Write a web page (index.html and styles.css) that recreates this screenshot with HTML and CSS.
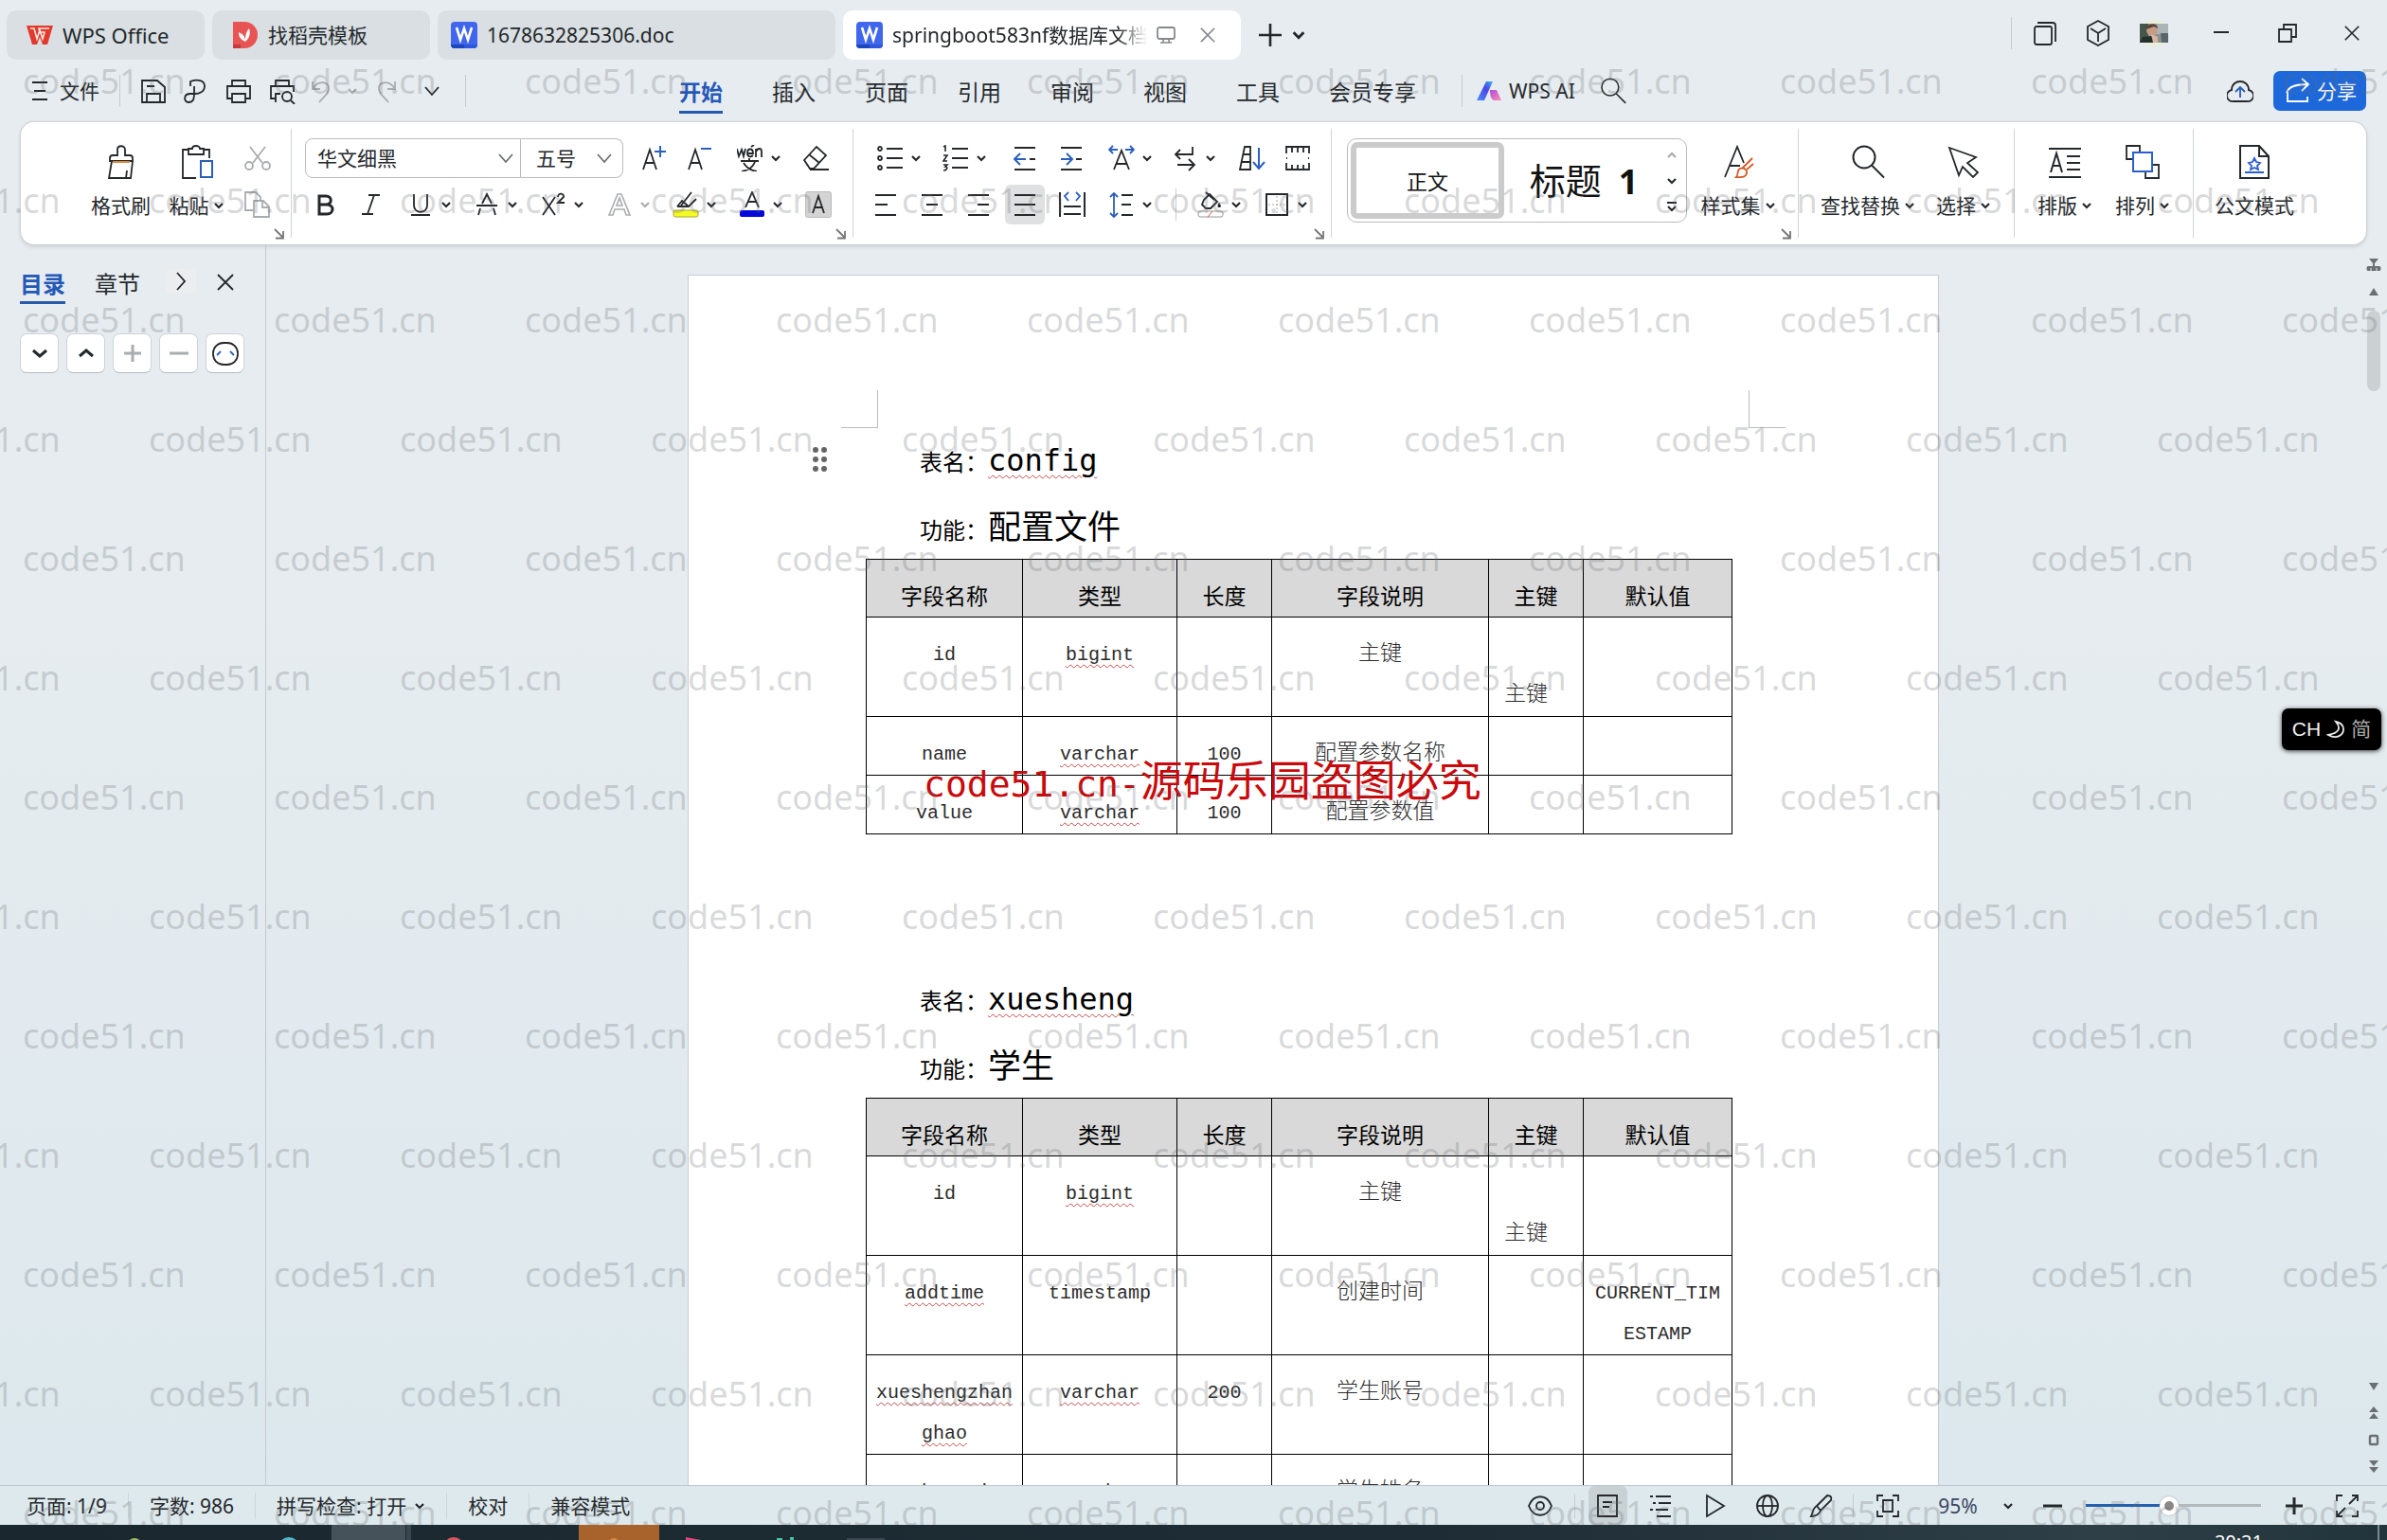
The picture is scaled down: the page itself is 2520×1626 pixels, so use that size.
FILE: index.html
```html
<!DOCTYPE html>
<html lang="zh-CN">
<head>
<meta charset="utf-8">
<title>springboot583nf数据库文档 - WPS Office</title>
<link rel="stylesheet" href="styles.css">
</head>
<body>
<svg class="sprite" aria-hidden="true">
  <symbol id="chev" viewBox="0 0 12 12"><path d="M2 4l4 4 4-4" fill="none" stroke="currentColor" stroke-width="2.2"/></symbol>
  <symbol id="chev-thin" viewBox="0 0 18 18"><path d="M2 5l7 8 7-8" fill="none" stroke="currentColor" stroke-width="1.8"/></symbol>
  <symbol id="launch" viewBox="0 0 12 12"><path d="M1 1l9 9M10 3v7.500H2" fill="none" stroke="currentColor" stroke-width="1.800"/></symbol>
  <symbol id="cross" viewBox="0 0 20 20"><path d="M2 2l16 16M18 2L2 18" fill="none" stroke="currentColor" stroke-width="1.8"/></symbol>
  <symbol id="word" viewBox="0 0 28 28"><rect width="28" height="28" rx="4" fill="#3f66ec"/><path d="M0 24h14v4H4a4 4 0 0 1-4-4z" fill="#1c46bd"/><path d="M14 24h14a4 4 0 0 1-4 4H14z" fill="#2f57dc"/><path d="M6 6l4 13 4-12 4 12 4-13" fill="none" stroke="#fff" stroke-width="2.600"/></symbol>
  <symbol id="search" viewBox="0 0 36 36"><circle cx="14" cy="13" r="11.500" fill="none" stroke="currentColor" stroke-width="2"/><path d="M22 21.500l13 13" stroke="currentColor" stroke-width="2"/></symbol>
</svg>

<header class="titlebar">
  <button class="tab tab-home"><svg class="i28" viewBox="0 0 28 28"><path d="M0 4h28l-6 20h-5l-3-8-3 8H6z" fill="#e3392b"/><path d="M4 7h4l3 11 3-9 3 9 2-7h-5l-1-4h11" fill="none" stroke="#fbe9e6" stroke-width="1.600"/></svg>WPS Office</button>
  <button class="tab tab-tpl"><svg class="i28" viewBox="0 0 28 28"><path d="M1 0h12a14 14 0 0 1 0 28H1z" fill="#e85454"/><path d="M1 24h8v4H1z" fill="#c73a3a"/><path d="M14 21c-5-2-7-5-7-10 4 2 6 4 7 8 0-5 1-9 4-12 2 6 0 11-4 14z" fill="#fff"/></svg>找稻壳模板</button>
  <button class="tab tab-doc"><svg class="i28"><use href="#word"/></svg>1678632825306.doc</button>
  <div class="tab tab-doc tab-active"><svg class="i28"><use href="#word"/></svg><span class="tab-name">springboot583nf数据库文档</span>
    <svg class="i20 muted" viewBox="0 0 20 20"><rect x="1" y="2" width="18" height="12" rx="2" fill="none" stroke="currentColor" stroke-width="1.800"/><path d="M7 14v4M13 14v4M4 18h12" stroke="currentColor" stroke-width="1.600"/></svg>
    <button class="icon-btn muted" aria-label="关闭标签"><svg class="i18"><use href="#cross"/></svg></button></div>
  <button class="icon-btn new-tab" aria-label="新建"><svg class="i28" viewBox="0 0 28 28"><path d="M14 2v24M2 14h24" stroke="currentColor" stroke-width="2.600"/></svg></button>
  <button class="icon-btn" aria-label="标签列表"><svg class="i16"><use href="#chev"/></svg></button>
  <div class="window-tools">
    <span class="vline"></span>
    <button class="icon-btn" aria-label="窗口"><svg class="i28" viewBox="0 0 28 28"><g fill="none" stroke="currentColor" stroke-width="1.800"><rect x="3" y="7" width="18" height="19" rx="2"/><path d="M6 3h16a3 3 0 0 1 3 3v17"/></g></svg></button>
    <button class="icon-btn" aria-label="应用"><svg class="i28" viewBox="0 0 28 28"><g fill="none" stroke="currentColor" stroke-width="1.800"><path d="M14 1l11 6v14l-11 6-11-6V7zM6 9l8 5 8-5M14 14v9"/></g></svg></button>
    <button class="icon-btn" aria-label="账户"><svg class="avatar" viewBox="0 0 30 32"><circle cx="15" cy="16" r="15" fill="#e8eddd"/><rect y="6" width="30" height="20" fill="#8b9490"/><path d="M0 6h9v20H0z" fill="#45564b"/><path d="M18 6h12v11H18z" fill="#aab5b8"/><ellipse cx="13" cy="13" rx="6" ry="6" fill="#c59d86"/><path d="M7 12c0-7 12-7 12-1l-4-2z" fill="#5d4135"/><path d="M0 26l3-6 9-1 5 7z" fill="#243029"/><path d="M12 17l7 3v6h-5z" fill="#d8b4a2"/><path d="M22 16h8v10h-7z" fill="#59666b"/></svg></button>
    <button class="icon-btn" aria-label="最小化"><svg class="i20" viewBox="0 0 20 20"><path d="M2 9h16" stroke="currentColor" stroke-width="2"/></svg></button>
    <button class="icon-btn" aria-label="还原"><svg class="i20" viewBox="0 0 20 20"><path d="M1 6h13v13H1zM6 6V1h13v13h-5" fill="none" stroke="currentColor" stroke-width="1.800"/></svg></button>
    <button class="icon-btn" aria-label="关闭"><svg class="i18"><use href="#cross"/></svg></button>
  </div>
</header>

<nav class="menubar">
  <button class="file-btn"><svg class="i28" viewBox="0 0 28 28"><path d="M6 5h16M8 14h12M6 23h16" stroke="currentColor" stroke-width="2"/></svg>文件</button>
  <div class="quick">
    <span class="vline"></span>
    <button class="icon-btn" aria-label="保存"><svg class="i28" viewBox="0 0 28 28"><g fill="none" stroke="currentColor" stroke-width="1.800"><path d="M2 3h16l8 7v16H2zM7 26v-9h14v9M7 9h8"/></g></svg></button>
    <button class="icon-btn" aria-label="输出为PDF"><svg class="i28" viewBox="0 0 28 28"><path d="M9 9V4c8-3 15-1 15 5s-6 8-10 8H9c-8 0-7 9-2 9 6 0 6-5 6-10V9" fill="none" stroke="currentColor" stroke-width="1.800"/></svg></button>
    <button class="icon-btn" aria-label="打印"><svg class="i28" viewBox="0 0 28 28"><g fill="none" stroke="currentColor" stroke-width="1.800"><path d="M7 9V3h14v6M7 22H2V9h24v13h-5M7 17h14v9H7z"/></g></svg></button>
    <button class="icon-btn" aria-label="打印预览"><svg class="i28" viewBox="0 0 28 28"><g fill="none" stroke="currentColor" stroke-width="1.800"><path d="M7 9V3h14v6M7 22H2V9h24v6M7 26v-9h5"/><circle cx="19" cy="20" r="5"/><path d="M23 24l4 4"/></g></svg></button>
    <button class="icon-btn faint" aria-label="撤销"><svg class="i28" viewBox="0 0 28 28"><path d="M4 4v8h8M4 12C10 2 22 4 21 12c0 5-6 9-10 14" fill="none" stroke="currentColor" stroke-width="1.800"/></svg></button>
    <button class="icon-btn faint" aria-label="撤销列表"><svg class="i12"><use href="#chev"/></svg></button>
    <button class="icon-btn faint" aria-label="恢复"><svg class="i28" viewBox="0 0 28 28"><path d="M24 4v8h-8M24 12C18 2 6 4 7 12c0 5 6 9 10 14" fill="none" stroke="currentColor" stroke-width="1.800"/></svg></button>
    <button class="icon-btn" aria-label="更多"><svg class="i18"><use href="#chev-thin"/></svg></button>
    <span class="vline"></span>
  </div>
  <div class="menus">
    <button class="menu menu-on">开始</button><button class="menu">插入</button><button class="menu">页面</button><button class="menu">引用</button><button class="menu">审阅</button><button class="menu">视图</button><button class="menu">工具</button><button class="menu">会员专享</button>
  </div>
  <span class="vline ai-line"></span>
  <button class="ai-btn"><svg class="i28" viewBox="0 0 28 28"><defs><linearGradient id="g1" x1="1" y1="0" x2="0" y2="1"><stop offset="0" stop-color="#39b8f5"/><stop offset=".4" stop-color="#4a45e6"/><stop offset="1" stop-color="#4f8cf7"/></linearGradient><linearGradient id="g2" x1="0" y1="0" x2="1" y2="1"><stop offset="0" stop-color="#b14be0"/><stop offset="1" stop-color="#ff8fae"/></linearGradient></defs><path d="M11 4h7l-9 20H1z" fill="url(#g1)"/><path d="M15 13h7l5 11h-7c-4 0-5-6-5-11z" fill="url(#g2)"/></svg>WPS AI</button>
  <button class="icon-btn search-btn" aria-label="搜索"><svg class="i28"><use href="#search"/></svg></button>
  <div class="menu-right">
    <button class="icon-btn" aria-label="云同步"><svg class="i28" viewBox="0 0 28 28"><path d="M7 25a6 6 0 0 1-2-12C5 1 23 1 23 13a6 6 0 0 1-2 12z" fill="none" stroke="currentColor" stroke-width="1.800"/><path d="M14 21V11M9 15l5-5 5 5" fill="none" stroke="#2b5bb5" stroke-width="1.800"/></svg></button>
    <button class="share"><svg class="i28" viewBox="0 0 28 28"><path d="M3 14v11h21v-5M2 16C4 9 12 7 25 7M18 1l7 6-7 7" fill="none" stroke="#fff" stroke-width="1.800"/></svg>分享</button>
  </div>
</nav>

<section class="ribbon">
  <div class="group g-clip">
    <button class="big w75"><svg class="i36" viewBox="0 0 36 36"><g fill="none" stroke="currentColor" stroke-width="1.800"><path d="M6 17h24v-3c0-2-1-3-3-3h-5V5c0-5-8-5-8 0v6H9c-2 0-3 1-3 3zM8 17L5 35h23l2-18M24 27l-1 8"/></g><path d="M9 18h18" stroke="#d48a3a" stroke-width="2"/></svg><span>格式刷</span></button>
    <button class="big w85"><svg class="i36" viewBox="0 0 36 36"><g fill="none" stroke="currentColor" stroke-width="1.800"><path d="M9 5H3v30h14M25 5h6v9M9 10h16V4h-4c0-4-8-4-8 0H9z"/></g><path d="M22 17h12v17H22z" fill="none" stroke="#2b5fb5" stroke-width="2"/></svg><span>粘贴<svg class="i12"><use href="#chev"/></svg></span></button>
    <div class="rows rows-clip">
      <button class="icon-btn faint" aria-label="剪切"><svg class="i28" viewBox="0 0 28 28"><g fill="none" stroke="currentColor" stroke-width="1.800"><path d="M6 2l13 17M22 2L9 19"/><circle cx="5" cy="22" r="4"/><circle cx="23" cy="22" r="4"/></g></svg></button>
      <button class="icon-btn faint" aria-label="复制"><svg class="i28" viewBox="0 0 28 28"><g fill="none" stroke="currentColor" stroke-width="1.800"><path d="M9 20H1V1h11l5 5v4M10 10h10l6 6v11H10zM19 10v7h7"/></g></svg></button>
    </div>
    <svg class="launch"><use href="#launch"/></svg>
  </div>

  <div class="group g-font">
    <div class="rows">
      <div class="row row-font1">
        <label class="combo combo-l"><select aria-label="字体"><option>华文细黑</option></select><svg class="i18"><use href="#chev-thin"/></svg></label>
        <label class="combo combo-r"><select aria-label="字号"><option>五号</option></select><svg class="i18"><use href="#chev-thin"/></svg></label>
        <button class="icon-btn" aria-label="增大字号"><svg class="i28" viewBox="0 0 28 28"><path d="M3 26L10 5l7 21M5 19h10" fill="none" stroke="currentColor" stroke-width="1.800"/><path d="M21 1v12M15 7h12" stroke="#2b5fc0" stroke-width="2"/></svg></button>
        <button class="icon-btn" aria-label="减小字号"><svg class="i28" viewBox="0 0 28 28"><path d="M3 26L10 5l7 21M5 19h10" fill="none" stroke="currentColor" stroke-width="1.800"/><path d="M16 4h11" stroke="#2b5fc0" stroke-width="2"/></svg></button>
        <button class="duo" aria-label="拼音指南"><svg class="i28" viewBox="0 0 28 28"><g fill="none" stroke="currentColor" stroke-width="1.800"><path d="M0 4l2 8 3-7 2 7 2-8M11 9h6c0-6-6-6-6 0 0 4 4 4 6 2M15 2l3-2M20 13V4M20 7c2-4 6-4 6 0v6M4 17h19M13 14v3M7 19c3 5 8 8 14 9M19 18c-2 5-7 9-14 10"/></g></svg><svg class="i12"><use href="#chev"/></svg></button>
        <button class="icon-btn" aria-label="清除格式"><svg class="i28" viewBox="0 0 28 28"><g fill="none" stroke="currentColor" stroke-width="1.800"><path d="M2 16L15 2l10 9-13 14H8zM7 10l11 9M8 26h20"/></g></svg></button>
      </div>
      <div class="row row-font2">
        <button class="icon-btn" aria-label="加粗"><svg class="i28" viewBox="0 0 28 28"><path d="M8 5h7c7 0 7 9 0 9H8zM8 14h8c8 0 8 10 0 10H8z" fill="none" stroke="currentColor" stroke-width="3"/></svg></button>
        <button class="icon-btn" aria-label="倾斜"><svg class="i28" viewBox="0 0 28 28"><path d="M12 4h12M5 24h12M18 4l-7 20" stroke="currentColor" stroke-width="1.800"/></svg></button>
        <button class="duo" aria-label="下划线"><svg class="i28" viewBox="0 0 28 28"><path d="M7 3v12c0 9 14 9 14 0V3M4 25h20" fill="none" stroke="currentColor" stroke-width="1.800"/></svg><svg class="i12"><use href="#chev"/></svg></button>
        <button class="duo" aria-label="删除线"><svg class="i28" viewBox="0 0 28 28"><path d="M9 13l5-10 5 10M3 15h22M7 18l-2 7M21 18l2 7" fill="none" stroke="currentColor" stroke-width="1.800"/></svg><svg class="i12"><use href="#chev"/></svg></button>
        <button class="duo" aria-label="上标"><svg class="i28" viewBox="0 0 28 28"><path d="M3 6l13 19M16 6L3 25" stroke="currentColor" stroke-width="1.800"/><path d="M19 6c0-5 7-4 6 0l-6 6h7" fill="none" stroke="currentColor" stroke-width="1.800"/></svg><svg class="i12"><use href="#chev"/></svg></button>
        <button class="duo faint" aria-label="文字效果"><svg class="i28" viewBox="0 0 28 28"><path d="M3 25L12 3h4l9 22h-4l-2-6H9l-2 6zM11 15h6l-3-8z" fill="none" stroke="currentColor" stroke-width="1.600"/></svg><svg class="i12"><use href="#chev"/></svg></button>
        <button class="duo" aria-label="突出显示"><svg class="i28" viewBox="0 0 28 28"><path d="M5 16h12l8-8M9 15L20 1M5 16l5-6 6 5" fill="none" stroke="currentColor" stroke-width="1.800"/><rect x="1" y="20" width="26" height="7" rx="2" fill="#f5fb22" stroke="#a6ab3a"/></svg><svg class="i12"><use href="#chev"/></svg></button>
        <button class="duo" aria-label="字体颜色"><svg class="i28" viewBox="0 0 28 28"><path d="M7 17l7-16 7 16M9 11h10" fill="none" stroke="currentColor" stroke-width="1.800"/><rect x="1" y="20" width="26" height="7" rx="2" fill="#0508d8"/></svg><svg class="i12"><use href="#chev"/></svg></button>
        <button class="icon-btn" aria-label="字符底纹"><svg class="i28" viewBox="0 0 28 28"><rect x=".5" y=".5" width="27" height="27" rx="2" fill="#d4d4d4" stroke="#bbb"/><path d="M8 23l6-18 6 18M10 17h8" fill="none" stroke="currentColor" stroke-width="1.800"/></svg></button>
      </div>
    </div>
    <svg class="launch"><use href="#launch"/></svg>
  </div>

  <div class="group g-para">
    <div class="rows">
      <div class="row row-para1">
        <button class="duo" aria-label="项目符号"><svg class="i28" viewBox="0 0 28 28"><path d="M10 4h17M10 14h17M10 24h17" stroke="currentColor" stroke-width="2"/><g fill="none" stroke="currentColor" stroke-width="1.800"><circle cx="3" cy="4" r="2"/><circle cx="3" cy="14" r="2"/><circle cx="3" cy="24" r="2"/></g></svg><svg class="i12"><use href="#chev"/></svg></button>
        <button class="duo" aria-label="编号"><svg class="i28" viewBox="0 0 28 28"><path d="M10 4h17M10 14h17M10 24h17" stroke="currentColor" stroke-width="2"/><path d="M1 2l2-1v6M1 11h4l-4 6h4M1 21h4l-2 2c3 0 2 4-2 4" fill="none" stroke="currentColor" stroke-width="1.600"/></svg><svg class="i12"><use href="#chev"/></svg></button>
        <button class="icon-btn" aria-label="减少缩进"><svg class="i28" viewBox="0 0 28 28"><path d="M3 3h22M3 26h22M19 15h6" stroke="currentColor" stroke-width="2"/><path d="M15 15H3M9 9l-6 6 6 6" fill="none" stroke="#2b5fc0" stroke-width="2"/></svg></button>
        <button class="icon-btn" aria-label="增加缩进"><svg class="i28" viewBox="0 0 28 28"><path d="M3 3h22M3 26h22M19 15h6" stroke="currentColor" stroke-width="2"/><path d="M3 15h12M9 9l6 6-6 6" fill="none" stroke="#2b5fc0" stroke-width="2"/></svg></button>
        <button class="duo" aria-label="字符缩放"><svg class="i28" viewBox="0 0 28 28"><path d="M6 26L14 6l8 20M8 20h12" fill="none" stroke="currentColor" stroke-width="1.800"/><path d="M10 5H1M5 1L1 5l4 4M18 5h9M23 1l4 4-4 4" fill="none" stroke="#2b5fc0" stroke-width="1.800"/></svg><svg class="i12"><use href="#chev"/></svg></button>
        <button class="duo" aria-label="换行"><svg class="i28" viewBox="0 0 28 28"><path d="M22 2v8H4M9 5L4 10l5 5M6 21h18M18 15l6 6-6 6" fill="none" stroke="currentColor" stroke-width="1.800"/></svg><svg class="i12"><use href="#chev"/></svg></button>
        <button class="icon-btn" aria-label="排序"><svg class="i28" viewBox="0 0 28 28"><path d="M1 26L6 2h6v24zM4 10h8M2 18h10" fill="none" stroke="currentColor" stroke-width="1.800"/><path d="M21 3v22M15 18l6 7 6-7" fill="none" stroke="#2b5fc0" stroke-width="2"/></svg></button>
        <button class="icon-btn" aria-label="制表位"><svg class="i28" viewBox="0 0 28 28"><path d="M2 9V2h24v7M8 2v6M14 2v6M20 2v6M2 19v7h24v-7M8 26v-5M14 26v-5M20 26v-5M2 14h1M25 14h1" fill="none" stroke="currentColor" stroke-width="1.800"/></svg></button>
      </div>
      <div class="row row-para2">
        <button class="icon-btn" aria-label="左对齐"><svg class="i28" viewBox="0 0 28 28"><path d="M3 4h22M3 14h13M3 25h22" stroke="currentColor" stroke-width="2"/></svg></button>
        <button class="icon-btn" aria-label="居中"><svg class="i28" viewBox="0 0 28 28"><path d="M3 4h22M8 14h12M3 25h22" stroke="currentColor" stroke-width="2"/></svg></button>
        <button class="icon-btn" aria-label="右对齐"><svg class="i28" viewBox="0 0 28 28"><path d="M3 4h22M13 14h12M3 25h22" stroke="currentColor" stroke-width="2"/></svg></button>
        <button class="icon-btn pressed" aria-label="两端对齐"><svg class="i28" viewBox="0 0 28 28"><path d="M3 4h22M3 14h22M3 25h22" stroke="currentColor" stroke-width="2"/></svg></button>
        <button class="icon-btn" aria-label="分散对齐"><svg class="i28" viewBox="0 0 28 28"><path d="M1 1v26M27 1v26M5 16h18M5 24h18" stroke="currentColor" stroke-width="2"/><path d="M10 1L6 5l4 5M18 1l4 4-4 5" fill="none" stroke="#2b5fc0" stroke-width="1.800"/></svg></button>
        <button class="duo" aria-label="行距"><svg class="i28" viewBox="0 0 28 28"><path d="M14 4h12M14 14h10M14 25h12" stroke="currentColor" stroke-width="2"/><path d="M6 2v25M2 6l4-4 4 4M2 23l4 4 4-4" fill="none" stroke="#2b5fc0" stroke-width="1.800"/></svg><svg class="i12"><use href="#chev"/></svg></button>
        <span class="vline"></span>
        <button class="duo" aria-label="底纹颜色"><svg class="i28" viewBox="0 0 28 28"><path d="M7 9l6-6 8 8-7 7H9l-4-4zM9 1l9 8" fill="none" stroke="currentColor" stroke-width="1.800"/><path d="M23 12c3 4 2 5 0 5s-2-2 0-5" fill="currentColor"/><rect x="1" y="21" width="26" height="6" rx="2" fill="#fff" stroke="#999"/><path d="M11 27l5-6" stroke="#c55"/></svg><svg class="i12"><use href="#chev"/></svg></button>
        <button class="duo" aria-label="边框"><svg class="i28" viewBox="0 0 28 28"><path d="M3 3h22v22H3z" fill="none" stroke="currentColor" stroke-width="2"/><path d="M14 5v19M5 14h19" stroke="#aaa" stroke-dasharray="2 2"/></svg><svg class="i12"><use href="#chev"/></svg></button>
      </div>
    </div>
    <svg class="launch"><use href="#launch"/></svg>
  </div>

  <div class="group g-style">
    <div class="gallery">
      <button class="style-card style-on">正文</button>
      <button class="style-card style-h1">标题 <b>1</b></button>
      <div class="gallery-nav">
        <button class="icon-btn faint" aria-label="上一行"><svg class="i12 flip"><use href="#chev"/></svg></button>
        <button class="icon-btn" aria-label="下一行"><svg class="i12"><use href="#chev"/></svg></button>
        <button class="icon-btn" aria-label="展开"><svg class="i12" viewBox="0 0 12 12"><path d="M1 2h10M2 6l4 4 4-4" fill="none" stroke="currentColor" stroke-width="2"/></svg></button>
      </div>
    </div>
    <button class="big w88"><svg class="i36" viewBox="0 0 36 36"><path d="M4 34L17 2l7 17M9 22h11" fill="none" stroke="currentColor" stroke-width="1.800"/><path d="M16 34c3-3 0-7 4-9 5-2 9 3 6 7-2 3-6 2-10 2zM23 24l10-10M27 26l7-6" fill="none" stroke="#d05a26" stroke-width="1.800"/></svg><span>样式集<svg class="i12"><use href="#chev"/></svg></span></button>
    <svg class="launch"><use href="#launch"/></svg>
  </div>

  <div class="group g-find">
    <button class="big w116"><svg class="i36"><use href="#search"/></svg><span>查找替换<svg class="i12"><use href="#chev"/></svg></span></button>
    <button class="big w86"><svg class="i36" viewBox="0 0 36 36"><path d="M3 3l28 10-9 6 11 10-5 5-11-11-4 9z" fill="none" stroke="currentColor" stroke-width="1.800"/></svg><span>选择<svg class="i12"><use href="#chev"/></svg></span></button>
  </div>

  <div class="group g-layout">
    <button class="big w82"><svg class="i36" viewBox="0 0 36 36"><path d="M1 4h34M1 34h34M20 12h14M20 19h14M20 26h14" stroke="currentColor" stroke-width="2"/><path d="M3 29l6-20 6 20M5 22h8" fill="none" stroke="currentColor" stroke-width="2"/></svg><span>排版<svg class="i12"><use href="#chev"/></svg></span></button>
    <button class="big w82"><svg class="i36" viewBox="0 0 36 36"><path d="M1 1h14v14H1zM21 21h14v14H21z" fill="none" stroke="currentColor" stroke-width="1.800"/><path d="M8 8h20v20H8z" fill="#fff" stroke="#2b5fd0" stroke-width="2"/></svg><span>排列<svg class="i12"><use href="#chev"/></svg></span></button>
  </div>

  <div class="group g-gov">
    <button class="big w100"><svg class="i36" viewBox="0 0 36 36"><path d="M3 1h20l10 11v23H3zM23 1v11h10" fill="none" stroke="currentColor" stroke-width="2"/><path d="M18 14l2 4 4 1-3 3 1 4-4-2-4 2 1-4-3-3 4-1zM8 29h20" fill="none" stroke="#2b5fd0" stroke-width="1.800"/></svg><span>公文模式</span></button>
  </div>
</section>

<div class="workspace">
  <aside class="side">
    <div class="side-tabs">
      <button class="side-tab side-on">目录</button>
      <button class="side-tab">章节</button>
      <button class="icon-btn side-next" aria-label="下一个"><svg class="i20" viewBox="0 0 20 20"><path d="M6 1l8 9-8 9" fill="none" stroke="currentColor" stroke-width="1.800"/></svg></button>
      <button class="icon-btn side-close" aria-label="关闭"><svg class="i20"><use href="#cross"/></svg></button>
    </div>
    <div class="side-tools">
      <button class="tool" aria-label="展开"><svg class="i24" viewBox="0 0 24 24"><path d="M5 9l7 6 7-6" fill="none" stroke="currentColor" stroke-width="3"/></svg></button>
      <button class="tool" aria-label="折叠"><svg class="i24" viewBox="0 0 24 24"><path d="M5 15l7-6 7 6" fill="none" stroke="currentColor" stroke-width="3"/></svg></button>
      <button class="tool faint" aria-label="添加"><svg class="i20" viewBox="0 0 20 20"><path d="M10 1v18M1 10h18" stroke="currentColor" stroke-width="3"/></svg></button>
      <button class="tool faint" aria-label="删除"><svg class="i20" viewBox="0 0 20 20"><path d="M0 10h20" stroke="currentColor" stroke-width="3"/></svg></button>
      <button class="tool" aria-label="智能识别"><svg class="i28" viewBox="0 0 28 28"><rect x="1" y="3" width="26" height="23" rx="11" fill="none" stroke="currentColor" stroke-width="1.800"/><path d="M5 16l4-4M23 16l-4-4" stroke="#2b5fc0" stroke-width="1.800"/></svg></button>
    </div>
  </aside>

  <main class="canvas">
    <article class="page">
      <span class="crop crop-l"></span><span class="crop crop-r"></span>
      <svg class="handle" viewBox="0 0 16 26"><g fill="#666"><circle cx="3" cy="3" r="3"/><circle cx="12" cy="3" r="3"/><circle cx="3" cy="13" r="3"/><circle cx="12" cy="13" r="3"/><circle cx="3" cy="23" r="3"/><circle cx="12" cy="23" r="3"/></g></svg>
      <section class="block">
        <p class="line">表名：<span class="code typo">config</span></p>
        <p class="line">功能：<span class="title">配置文件</span></p>
        <table class="fields">
          <colgroup><col class="c1"><col class="c2"><col class="c3"><col class="c4"><col class="c5"><col class="c6"></colgroup>
          <thead><tr><th>字段名称</th><th>类型</th><th>长度</th><th>字段说明</th><th>主键</th><th>默认值</th></tr></thead>
          <tbody>
            <tr><td>id</td><td><span class="typo">bigint</span></td><td></td><td class="note">主键</td><td class="key"><br>主键</td><td></td></tr>
            <tr><td>name</td><td><span class="typo">varchar</span></td><td>100</td><td class="note">配置参数名称</td><td></td><td></td></tr>
            <tr><td>value</td><td><span class="typo">varchar</span></td><td>100</td><td class="note">配置参数值</td><td></td><td></td></tr>
          </tbody>
        </table>
      </section>
      <section class="block">
        <p class="line">表名：<span class="code typo">xuesheng</span></p>
        <p class="line">功能：<span class="title">学生</span></p>
        <table class="fields">
          <colgroup><col class="c1"><col class="c2"><col class="c3"><col class="c4"><col class="c5"><col class="c6"></colgroup>
          <thead><tr><th>字段名称</th><th>类型</th><th>长度</th><th>字段说明</th><th>主键</th><th>默认值</th></tr></thead>
          <tbody>
            <tr><td>id</td><td><span class="typo">bigint</span></td><td></td><td class="note">主键</td><td class="key"><br>主键</td><td></td></tr>
            <tr><td><span class="typo">addtime</span></td><td>timestamp</td><td></td><td class="note">创建时间</td><td></td><td>CURRENT_TIMESTAMP</td></tr>
            <tr><td><span class="typo">xueshengzhanghao</span></td><td><span class="typo">varchar</span></td><td>200</td><td class="note">学生账号</td><td></td><td></td></tr>
            <tr><td><span class="typo">xueshengxingming</span></td><td><span class="typo">varchar</span></td><td>200</td><td class="note">学生姓名</td><td></td><td></td></tr>
          </tbody>
        </table>
      </section>
      <div class="notice"><span class="notice-latin">code51.cn-</span>源码乐园盗图必究</div>
    </article>
  </main>

  <div class="scroll">
    <svg class="i16" viewBox="0 0 16 16"><path d="M3 1h10l-4 5v3h5c2 0 2 5 0 5H2c-2 0-2-5 0-5h5V6z" fill="currentColor"/><path d="M5 11v3M11 11v3" stroke="#e6ecf0"/></svg>
    <svg class="i16" viewBox="0 0 16 16"><path d="M8 4l5 8H3z" fill="currentColor"/></svg>
    <span class="thumb"></span>
    <div class="scroll-end">
      <svg class="i16" viewBox="0 0 16 16"><path d="M8 12l5-8H3z" fill="currentColor"/></svg>
      <svg class="i16" viewBox="0 0 16 16"><path d="M8 1l5 6H3zM8 8l5 6H3z" fill="currentColor"/></svg>
      <svg class="i16" viewBox="0 0 16 16"><rect x="4" y="4" width="8" height="9" rx="1" fill="none" stroke="currentColor" stroke-width="2.400"/></svg>
      <svg class="i16" viewBox="0 0 16 16"><path d="M8 8L3 2h10zM8 15L3 9h10z" fill="currentColor"/></svg>
    </div>
  </div>
</div>

<footer class="status">
  <div class="status-left">
    <span class="st">页面: 1/9</span><span class="st">字数: 986</span><button class="st">拼写检查: 打开<svg class="i12"><use href="#chev"/></svg></button><button class="st">校对</button><span class="st st-last">兼容模式</span>
  </div>
  <div class="status-right">
    <button class="icon-btn" aria-label="护眼模式"><svg class="i28" viewBox="0 0 28 28"><path d="M2 14c5-13 19-13 24 0-5 13-19 13-24 0z" fill="none" stroke="currentColor" stroke-width="1.800"/><circle cx="14" cy="14" r="4" fill="none" stroke="currentColor" stroke-width="1.800"/></svg></button>
    <span class="vline"></span>
    <button class="icon-btn pressed" aria-label="页面视图"><svg class="i28" viewBox="0 0 28 28"><path d="M4 3h20v22H4zM9 10h10M9 15h7" fill="none" stroke="currentColor" stroke-width="1.800"/></svg></button>
    <button class="icon-btn" aria-label="大纲视图"><svg class="i28" viewBox="0 0 28 28"><path d="M3 4h3M9 4h16M6 11h3M12 11h13M3 18h3M9 18h13M10 25h15" stroke="currentColor" stroke-width="2"/></svg></button>
    <button class="icon-btn" aria-label="阅读"><svg class="i28" viewBox="0 0 28 28"><path d="M5 3l18 11L5 25z" fill="none" stroke="currentColor" stroke-width="1.800"/></svg></button>
    <button class="icon-btn" aria-label="Web版式"><svg class="i28" viewBox="0 0 28 28"><g fill="none" stroke="currentColor" stroke-width="1.800"><circle cx="14" cy="14" r="11"/><ellipse cx="14" cy="14" rx="5" ry="11"/><path d="M3 14h22"/></g></svg></button>
    <button class="icon-btn" aria-label="写作模式"><svg class="i28" viewBox="0 0 28 28"><path d="M10 14L21 3c4 0 5 2 4 5L14 19zM10 14l4 5c-2 5-6 6-10 6 2-3 1-8 6-11z" fill="none" stroke="currentColor" stroke-width="1.800"/></svg></button>
    <span class="vline"></span>
    <button class="icon-btn" aria-label="适应页面"><svg class="i28" viewBox="0 0 28 28"><path d="M3 9V3h6M19 3h6v6M25 19v6h-6M9 25H3v-6M9 8h10v12H9z" fill="none" stroke="currentColor" stroke-width="1.800"/></svg></button>
    <span class="zoom-value">95%</span>
    <button class="icon-btn" aria-label="缩放比例"><svg class="i12"><use href="#chev"/></svg></button>
    <button class="icon-btn" aria-label="缩小"><svg class="i20" viewBox="0 0 20 20"><path d="M0 10h20" stroke="currentColor" stroke-width="3"/></svg></button>
    <input class="zoom" type="range" min="0" max="100" value="47" aria-label="缩放">
    <button class="icon-btn" aria-label="放大"><svg class="i20" viewBox="0 0 20 20"><path d="M10 1v18M1 10h18" stroke="currentColor" stroke-width="3"/></svg></button>
    <button class="icon-btn" aria-label="全屏"><svg class="i28" viewBox="0 0 28 28"><path d="M3 9V3h6M16 12l9-9M19 3h6v6M25 19v6h-6M12 16l-9 9M9 25H3v-6" fill="none" stroke="currentColor" stroke-width="1.800"/></svg></button>
  </div>
</footer>

<footer class="taskbar">
  <svg class="task-art" height="16" aria-hidden="true"><rect x="350" width="78" height="16" fill="#46525a"/><rect x="429" width="5" height="16" fill="#3a464f"/><rect x="611" width="85" height="16" fill="#a8632c"/><circle cx="142" cy="22" r="8" fill="#9dbd62"/><circle cx="305" cy="24" r="11" fill="#55b6cf"/><circle cx="479" cy="24" r="11" fill="#d9565e"/><circle cx="648" cy="20" r="6" fill="#d98a45"/><path d="M724 13l16 3h-16z" fill="#e0457c"/><path d="M820 14h6v2h-6zM834 13h4v3h-4z" fill="#4bc2a5"/><rect x="894" y="14" width="40" height="2" fill="#3a464f"/></svg>
  <span class="clock">20:21</span><span class="show-desktop"></span>
</footer>

<button class="ime">CH <svg class="i20" viewBox="0 0 20 20"><path d="M10 2c6 7 3 12-8 14 9 5 16 0 16-6 0-4-3-7-8-8z" fill="none" stroke="#eee" stroke-width="1.800"/></svg> <span class="ime-mode">简</span></button>
<div class="watermark" aria-hidden="true"></div>
<script src="watermark.js"></script>
</body>
</html>
```
FILE: styles.css
```css
* { box-sizing: border-box; }
body {
  margin: 0; height: 100vh; overflow: hidden; position: relative;
  display: flex; flex-direction: column;
  font: 21px/28px "Noto Sans", "Noto Sans CJK SC", sans-serif; color: #24282b;
  background: linear-gradient(to bottom, #e7ecf0 0%, #e6ecf0 40%, #dce8ed 100%);
}
button { margin: 0; padding: 0; border: 0; background: none; font: inherit; color: inherit; }
svg { display: block; flex: none; }
.sprite { position: absolute; width: 0; height: 0; }
.i12 { width: 12px; height: 12px; } .i16 { width: 16px; height: 16px; } .i18 { width: 18px; height: 18px; }
.i20 { width: 20px; height: 20px; } .i24 { width: 24px; height: 24px; } .i28 { width: 28px; height: 28px; } .i36 { width: 36px; height: 36px; }
.avatar { width: 30px; height: 32px; }
.flip { transform: scaleY(-1); }
.icon-btn { display: flex; align-items: center; justify-content: center; }
.muted { color: #85898c; } .faint { color: #a9adaf; }
.vline { width: 1px; height: 34px; background: #c6cbce; }

/* title bar */
.titlebar { display: flex; align-items: center; gap: 8px; height: 63px; flex: none; padding: 11px 0 0 7px; }
.tab { display: flex; align-items: center; gap: 10px; height: 52px; border-radius: 10px; background: #d9dfe2; padding-left: 14px; }
.tab-home { width: 209px; padding-left: 21px; font-size: 22px; }
.tab-tpl { width: 230px; padding-left: 21px; }
.tab-doc { width: 420px; }
.tab-active { background: #fff; padding-right: 26px; }
.tab-name { flex: 1; overflow: hidden; white-space: nowrap; -webkit-mask-image: linear-gradient(to right, #000 88%, transparent); mask-image: linear-gradient(to right, #000 88%, transparent); }
.tab-active .icon-btn { margin-left: 15px; }
.new-tab { margin-left: 9px; }
.window-tools { margin: -4px 0 0 auto; display: grid; grid-template-columns: 8px 56px 56px 62px 80px 60px 75px; align-items: center; }

/* menu bar */
.menubar { display: flex; align-items: center; height: 66px; flex: none; padding: 0 22px 0 28px; }
.file-btn { display: flex; align-items: center; gap: 7px; width: 98px; }
.quick { display: grid; grid-template-columns: 14px 44px 44px 48px 44px 40px 24px 46px 52px 10px; align-items: center; }
.quick .vline:last-child { justify-self: end; }
.menus { display: flex; gap: 52px; margin-left: 225px; font-size: 23px; line-height: 32px; }
.menu { padding: 8px 0 4px; border-bottom: 3px solid transparent; }
.menu-on { color: #2459b8; font-weight: 700; border-bottom-color: #2459b0; }
.ai-line { margin-left: 48px; }
.ai-btn { display: flex; align-items: center; gap: 7px; margin-left: 14px; }
.search-btn { margin-left: 26px; }
.menu-right { margin-left: auto; display: flex; align-items: center; gap: 21px; }
.share { display: flex; align-items: center; gap: 6px; width: 98px; height: 42px; padding-left: 12px; border-radius: 7px; background: #1d69dc; color: #fff; }

/* ribbon */
.ribbon { display: flex; flex: none; margin: 0 22px; height: 129px; padding: 7px 0; border-radius: 14px; background: #fff; box-shadow: 0 0 2px 1px #c9ced1, 0 3px 4px #cfd4d8; }
.group { position: relative; display: flex; border-right: 1px solid #d0d3d5; }
.group:last-child { border-right: 0; }
.g-clip { padding: 0 14px 0 68px; } .g-font { padding: 0 22px 0 14px; } .g-para { padding: 0 21px 0 20px; }
.g-style { padding: 0 19px 0 16px; } .g-find { padding: 0 10px 0 15px; } .g-layout { padding: 0 12px 0 12px; } .g-gov { padding: 0 14px; }
.launch { position: absolute; right: 6px; bottom: -2px; width: 12px; height: 12px; color: #777; }
.big { display: flex; flex-direction: column; align-items: center; gap: 14px; padding-top: 17px; height: 115px; }
.big span { display: flex; align-items: center; gap: 4px; }
.w75 { width: 75px; } .w82 { width: 82px; } .w85 { width: 85px; } .w86 { width: 86px; } .w88 { width: 88px; } .w100 { width: 100px; } .w116 { width: 116px; }
.rows { display: grid; grid-template-rows: 42px 42px; gap: 7px; padding-top: 10px; align-content: start; }
.rows-clip { width: 43px; }
.row { display: grid; align-items: center; justify-items: start; }
.duo { display: flex; align-items: center; gap: 7px; }
.row-font1 { grid-template-columns: 228px 108px 48px 54px 69px 28px; }
.row-font1 .icon-btn, .row-font1 .duo { margin-left: 18px; }
.row-font2 { grid-template-columns: 48px 53px repeat(6, 70px) 28px; padding-left: 7px; }
.row-para1 { grid-template-columns: 69px 73px 49px 53px 67px 71px 48px 28px; padding-left: 5px; }
.row-para2 { grid-template-columns: 49px 49px 49px 50px 52px 71px 23px 70px 47px; }
.pressed { background: #dfe0e1; border-radius: 6px; }
.row-para2 .pressed { width: 42px; height: 42px; margin: 0 -7px; }
.combo { display: flex; align-items: center; width: 100%; height: 42px; border: 1px solid #b9bcbe; padding-right: 6px; color: #6b6f72; }
.combo-l { border-radius: 8px 0 0 8px; } .combo-r { border-radius: 0 8px 8px 0; border-left: 0; padding-right: 10px; }
.combo select { appearance: none; flex: 1; min-width: 0; border: 0; background: none; font: inherit; color: #24282b; padding: 0 0 0 12px; }
.combo-r select { padding-left: 16px; }
.gallery { display: grid; grid-template-columns: 162px 168px 1fr; width: 359px; height: 89px; margin: 10px 10px 0 0; padding: 3px; border: 1px solid #b9bcbe; border-radius: 10px; }
.style-card { color: #111; }
.style-on { border: 6px solid #cbcbcb; border-radius: 7px; font-size: 22px; }
.style-h1 { font-size: 38px; line-height: 44px; }
.style-h1 b { margin-left: 8px; font-size: 36px; }
.gallery-nav { display: grid; grid-template-rows: repeat(3, 1fr); padding-right: 3px; }

/* workspace */
.workspace { flex: 1; min-height: 0; display: flex; }
.side { width: 281px; flex: none; border-right: 1px solid #c3c9cc; padding: 26px 0 0 21px; }
.side-tabs { display: flex; align-items: flex-start; font-size: 24px; line-height: 32px; height: 37px; }
.side-tab { padding-bottom: 2px; border-bottom: 3px solid transparent; margin-right: 31px; }
.side-on { color: #2459b8; font-weight: 700; border-bottom-color: #2a5aa8; }
.side-next { width: 32px; height: 26px; margin-left: -4px; background: #ebedef; border-radius: 4px; }
.side-close { width: 32px; height: 28px; margin-left: 15px; }
.side-tools { display: flex; gap: 8px; margin-top: 31px; }
.tool { display: flex; align-items: center; justify-content: center; width: 41px; height: 42px; border: 1px solid #cfd3d6; border-bottom-color: #b7bbbe; border-radius: 7px; background: #fff; }
.canvas { flex: 1; min-width: 0; overflow: hidden; padding: 32px 0 0 445px; }
.page { position: relative; width: 1321px; min-height: 1870px; padding: 161px 200px; background: #fff; border: 1px solid #c9cdd0; color: #000; }
.crop { position: absolute; top: 121px; width: 39px; height: 40px; border-bottom: 1px solid #bbb; }
.crop-l { left: 161px; border-right: 1px solid #bbb; } .crop-r { right: 161px; border-left: 1px solid #bbb; }
.handle { position: absolute; left: 131px; top: 181px; width: 16px; height: 26px; }
.block { margin: 0 0 140px -13px; }
.line { margin: 0; padding-left: 57px; height: 69px; line-height: 69px; font-size: 24px; white-space: nowrap; }
.code { font-family: "DejaVu Sans Mono", monospace; font-size: 32px; }
.title { font-size: 35px; }
.typo { text-decoration: underline wavy #c24a4a 1px; text-underline-offset: 4px; }
.fields { width: 914px; table-layout: fixed; border-collapse: collapse; }
.c1 { width: 165px; } .c2 { width: 163px; } .c3 { width: 100px; } .c4 { width: 229px; } .c5 { width: 100px; } .c6 { width: 157px; }
.fields th, .fields td { border: 1px solid #000; vertical-align: top; text-align: center; word-break: break-all; }
.fields th { padding: 16px 8px 0; line-height: 44px; background: #d9d9d9; font-size: 23px; font-weight: 400; }
.fields td { padding: 18px 8px 0; line-height: 43px; font-family: "Liberation Mono", "Noto Sans CJK SC", monospace; font-size: 20px; color: #2c2c2c; }
.fields .note, .fields .key { font-size: 23px; font-weight: 300; }
.fields .key { text-align: left; padding-left: 16px; }
.notice { position: absolute; left: 248px; top: 503px; font-size: 45px; line-height: 60px; white-space: nowrap; color: #c9090c; }
.notice-latin { font-family: "DejaVu Sans Mono", monospace; font-size: 38px; }
.scroll { display: flex; flex-direction: column; align-items: center; width: 28px; padding: 14px 0 12px; color: #6c7073; gap: 12px; }
.thumb { width: 14px; height: 85px; border-radius: 7px; background: #cbd0d3; }
.scroll-end { margin-top: auto; display: grid; gap: 12px; }

/* status bar */
.status { display: flex; align-items: stretch; flex: none; height: 42px; border-top: 1px solid #bcc6cb; background: #dee9ed; }
.status-left { display: flex; align-items: center; padding-left: 6px; }
.st { display: flex; align-items: center; gap: 8px; padding: 0 22px; border-right: 1px solid #cdd6da; }
.st-last { border-right: 0; }
.status-right { margin-left: auto; display: grid; grid-template-columns: 57px 16px 54px 58px 57px 54px 58px 10px 64px 84px 22px 71px 185px 70px 42px; padding-right: 21px; align-items: center; justify-items: center; }
.status-right .pressed { width: 41px; height: 41px; background: #c8d1d4; }
.status-right .vline { height: 26px; }
.zoom-value { color: #3c4763; }
.zoom { appearance: none; width: 100%; height: 28px; margin: 0; background: linear-gradient(to right, #2560b0 47%, #b2babd 47%) center / 100% 3px no-repeat; }
.zoom::-webkit-slider-thumb { appearance: none; width: 20px; height: 20px; border-radius: 50%; background: #8d8888; border: 5px solid #fff; box-shadow: 0 0 2px #999; }

.taskbar { position: relative; flex: none; display: flex; height: 16px; overflow: hidden; background: linear-gradient(to right, #1a272f, #1e2d35 60%, #2f3f47 88%, #22343b); color: #fff; }
.task-art { flex: 1; }
.clock { font-size: 20px; line-height: 24px; padding-top: 6px; margin-right: 121px; }
.show-desktop { width: 10px; border-left: 2px solid #7d8a90; }

.ime { position: absolute; right: 6px; top: 46%; height: 44px; width: 105px; display: flex; align-items: center; justify-content: center; gap: 6px; border-radius: 7px; background: #000; color: #f2f2f2; box-shadow: 0 1px 5px #333; font-family: "Liberation Sans", "Noto Sans CJK SC", sans-serif; }
.ime-mode { color: #a9a9a9; }

/* repeating site mark over the whole window */
.watermark { position: absolute; inset: 60px 0 16px; overflow: hidden; pointer-events: none; font: 36px/52px "Noto Sans", sans-serif; color: rgba(100, 104, 108, .25); }
.wm-row { display: flex; height: 126px; padding-left: 24px; }
.wm-row span { flex: none; width: 265px; }
.wm-row:nth-child(even) { margin-left: -132px; }
```
FILE: watermark.js
```js
// Fill the overlay with as many staggered marks as the window holds.
const layer = document.querySelector('.watermark');
const rows = Math.ceil(layer.clientHeight / 126);
const cols = Math.ceil(layer.clientWidth / 265) + 1;
for (let r = 0; r < rows; r++) {
  const row = document.createElement('div');
  row.className = 'wm-row';
  for (let c = 0; c < cols; c++) {
    const mark = document.createElement('span');
    mark.textContent = 'code51.cn';
    row.append(mark);
  }
  layer.append(row);
}
```
